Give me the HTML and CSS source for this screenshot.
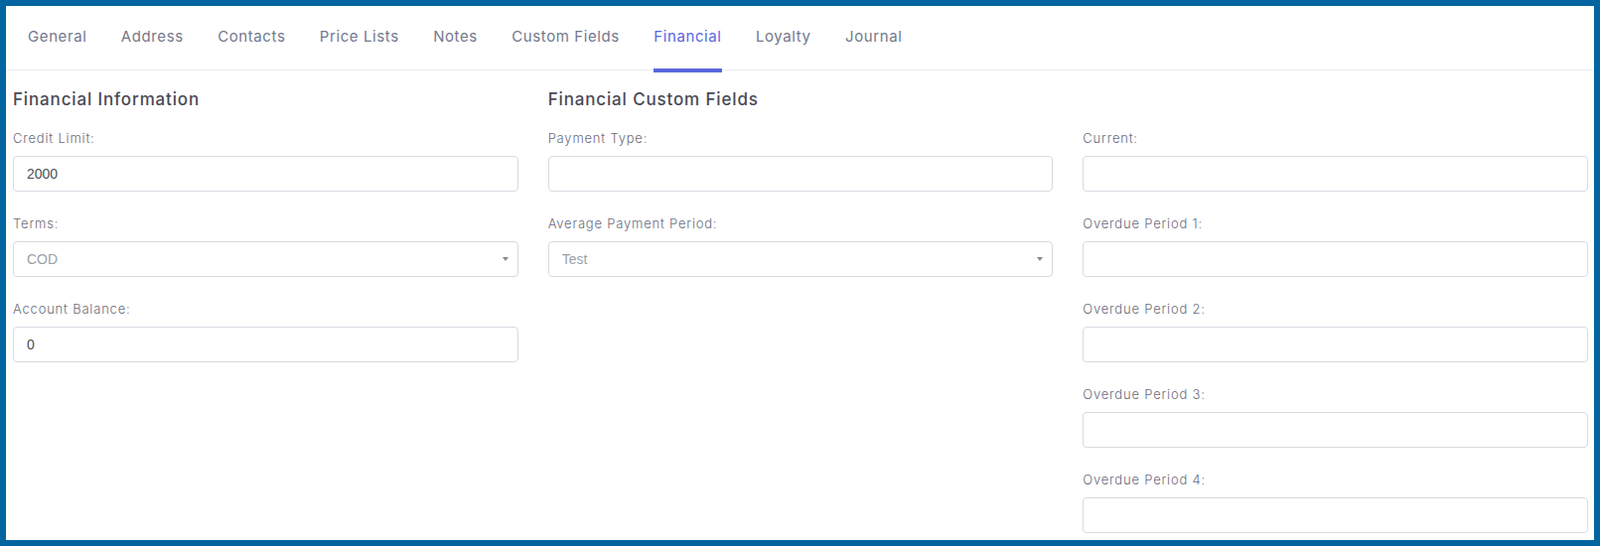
FILE: index.html
```html
<!DOCTYPE html>
<html lang="en">
<head>
  <meta charset="UTF-8" />
  <title>Customer - Financial</title>
  <meta name="viewport" content="width=device-width, initial-scale=1" />
  <link rel="stylesheet" href="styles.css">
</head>
<body>

<div class="frame">
  <nav class="tabs">
    <a class="tab" href="#">General</a>
    <a class="tab" href="#">Address</a>
    <a class="tab" href="#">Contacts</a>
    <a class="tab" href="#">Price Lists</a>
    <a class="tab" href="#">Notes</a>
    <a class="tab" href="#">Custom Fields</a>
    <a class="tab active" href="#">Financial</a>
    <a class="tab" href="#">Loyalty</a>
    <a class="tab" href="#">Journal</a>
  </nav>

  <div class="panel">
    <div class="col">
      <h3 class="heading">Financial Information</h3>
      <div class="field">
        <label>Credit Limit:</label>
        <input class="control" type="text" value="2000">
      </div>
      <div class="field">
        <label>Terms:</label>
        <div class="select-wrap">
          <select class="control select">
            <option>COD</option>
          </select>
        </div>
      </div>
      <div class="field">
        <label>Account Balance:</label>
        <input class="control" type="text" value="0">
      </div>
    </div>

    <div class="col">
      <h3 class="heading">Financial Custom Fields</h3>
      <div class="field">
        <label>Payment Type:</label>
        <input class="control" type="text">
      </div>
      <div class="field">
        <label>Average Payment Period:</label>
        <div class="select-wrap">
          <select class="control select">
            <option>Test</option>
          </select>
        </div>
      </div>
    </div>

    <div class="col">
      <h3 class="heading blank">&nbsp;</h3>
      <div class="field">
        <label>Current:</label>
        <input class="control" type="text">
      </div>
      <div class="field">
        <label>Overdue Period 1:</label>
        <input class="control" type="text">
      </div>
      <div class="field">
        <label>Overdue Period 2:</label>
        <input class="control" type="text">
      </div>
      <div class="field">
        <label>Overdue Period 3:</label>
        <input class="control" type="text">
      </div>
      <div class="field">
        <label>Overdue Period 4:</label>
        <input class="control" type="text">
      </div>
    </div>
  </div>
</div>

</body>
</html>
```

FILE: styles.css
```css
body { margin: 0; font-family: "Inter", "Open Sans", sans-serif; background: #fff; }
.frame { height: 550px; box-sizing: border-box; border: 6px solid #0265a0; overflow: hidden; background: #fff; }

.tabs { display: flex; gap: 34.4px; padding-left: 22px; border-bottom: 1px solid #ebedf2; }
.tab { display: block; padding: 20px 0 21px; line-height: 22px; font-size: 15px; letter-spacing: 0.6px; color: #74788d; text-decoration: none; border-bottom: 4px solid transparent; margin-bottom: -3px; }
.tab.active { color: #5867dd; border-bottom-color: #5867dd; }

.panel { display: grid; grid-template-columns: repeat(3, 1fr); column-gap: 30px; padding: 17px 6px 0 7px; }
.heading { margin: 0 0 17px; font-size: 17px; line-height: 24px; font-weight: 500; letter-spacing: 0.85px; color: #4a4957; }
.heading.blank { visibility: hidden; }

.field { margin-bottom: 22px; }
.field label { display: block; margin-bottom: 8px; font-size: 13px; line-height: 20px; font-weight: 300; letter-spacing: 0.8px; color: #6b6d7d; }

.control { display: block; width: 100%; height: 36px; box-sizing: border-box; padding: 0 13px; border: 1px solid #d8dae1; border-radius: 4px; background: #fff; font-family: "Liberation Sans", Arial, sans-serif; font-size: 14px; color: #495057; outline: none; }
.select-wrap { position: relative; }
.select { appearance: none; -webkit-appearance: none; color: #9d9fa8; }
.select-wrap::after { content: ""; position: absolute; right: 10px; top: 16px; border-left: 3px solid transparent; border-right: 3px solid transparent; border-top: 4px solid #888; pointer-events: none; }
```
